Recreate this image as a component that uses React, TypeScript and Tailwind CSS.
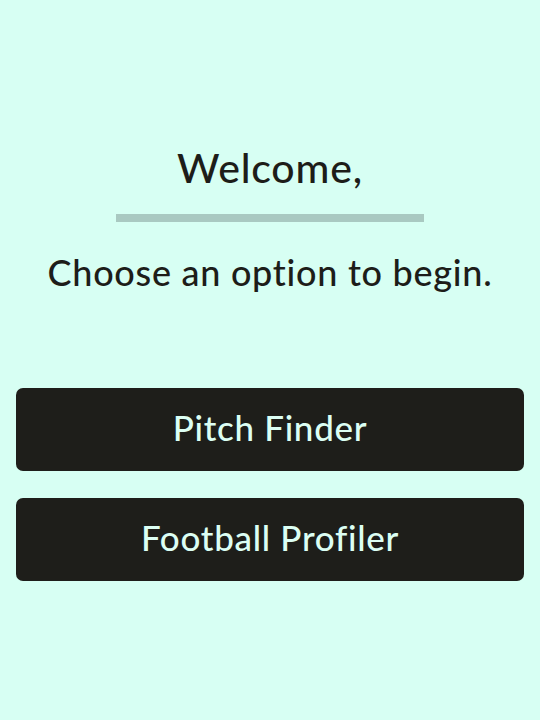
export default function App() {
  return (
    <div
      className="min-h-[720px] w-full bg-[#d7fff3] flex flex-col items-center pt-[142px] px-4 text-[#1d1d19]"
      style={{ fontFamily: 'Lato, "Noto Sans", sans-serif' }}
    >
      <h1 className="text-[41px] leading-[52px] font-medium tracking-[0.02em]">Welcome,</h1>
      <div className="mt-[20px] h-[8px] w-[308px] bg-[#a9c9c1]" />
      <p className="mt-[27px] text-[36px] leading-[46px] font-medium tracking-[0.02em]">
        Choose an option to begin.
      </p>
      <div className="mt-[93px] w-full flex flex-col gap-[27px]">
        <button className="h-[83px] w-full rounded-[7px] bg-[#1e1e1a] text-[#dcfff4] text-[35px] font-medium tracking-[0.02em] pb-[4px]">
          Pitch Finder
        </button>
        <button className="h-[83px] w-full rounded-[7px] bg-[#1e1e1a] text-[#dcfff4] text-[35px] font-medium tracking-[0.02em] pb-[4px]">
          Football Profiler
        </button>
      </div>
    </div>
  );
}
